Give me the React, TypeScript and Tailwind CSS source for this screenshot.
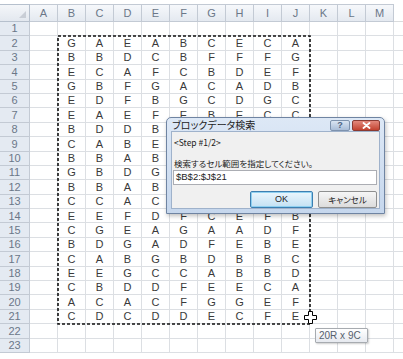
import React from "react";

const cols = ["A", "B", "C", "D", "E", "F", "G", "H", "I", "J", "K", "L", "M"];

// rows 2..21, columns B..J ("." = hidden under the dialog)
const data = [
  "GAEABCECA",
  "BBDCBFFFG",
  "ECAFCBDEF",
  "GBFGACADB",
  "EDFBGCDGC",
  "EAEFEBECC",
  "BDDB.....",
  "CABE.....",
  "BBAB.....",
  "GBDG.....",
  "BBAB.....",
  "CCAC.....",
  "EEFDFCEFB",
  "CGEAGAADF",
  "BDGADFEBE",
  "CABGBDBBC",
  "EEGCCABBD",
  "CBDDFEECA",
  "ACACFGGEF",
  "CDCDDECFE",
];

function cellValue(row: number, col: number) {
  if (row < 2 || row > 21 || col < 1 || col > 9) return "";
  const v = data[row - 2][col - 1];
  return v === "." ? "" : v;
}

const jp = "font-['Noto_Sans_CJK_JP','Noto_Sans',sans-serif] [font-feature-settings:'palt']";

function Dialog() {
  return (
    <div className="absolute left-[166px] top-[117px] w-[219px] h-[97px] rounded-t-[5px] border border-[#6f84a2] bg-gradient-to-b from-[#dde8f6] to-[#c6d7ed] flex flex-col px-[4px] pb-[4px] shadow-[1px_2px_4px_rgba(0,0,0,0.25)]">
      <div className="flex items-center h-[16px]">
        <span className={`${jp} text-[10px] leading-none text-[#1b1b1b] pl-[1px]`}>ブロックデータ検索</span>
        <div className="ml-auto flex gap-[2px] self-start mt-[2px]">
          <div className="w-[20px] h-[11px] rounded-[2px] border border-[#7d92ae] bg-gradient-to-b from-[#d9e4f2] to-[#a9bdd8] flex items-center justify-center font-['Liberation_Sans',sans-serif] text-[9px] font-bold leading-none text-[#4d6382]">
            ?
          </div>
          <div className="w-[28px] h-[11px] rounded-[2px] border border-[#8a3a32] bg-gradient-to-b from-[#e3877b] to-[#c2412f] flex items-center justify-center">
            <svg width="9" height="7" viewBox="0 0 9 7">
              <path d="M1.5 1 L7.5 6 M7.5 1 L1.5 6" stroke="#fff" strokeWidth="1.8" strokeLinecap="round" />
            </svg>
          </div>
        </div>
      </div>
      <div className="flex-1 bg-[#f0f0f0] border border-[#9fb2cb] flex flex-col pl-[1px] pr-[2px]">
        <div className={`${jp} text-[8.5px] leading-none text-[#1b1b1b] pl-[1px] mt-[6px]`}>&lt;Step #1/2&gt;</div>
        <div className={`${jp} text-[8.5px] leading-none text-[#1b1b1b] pl-[1px] mt-[12px]`}>検索するセル範囲を指定してください。</div>
        <div className="mt-[3px] h-[15px] bg-white border border-[#abadb3] flex items-center pl-[2px] font-['Liberation_Sans',sans-serif] text-[9.5px] text-[#222]">
          $B$2:$J$21
        </div>
        <div className="flex justify-end gap-[5px] mt-[6px]">
          <div className="w-[63px] h-[17px] rounded-[2px] border border-[#3c7fb1] bg-gradient-to-b from-[#eaf6fd] to-[#c4e1f3] shadow-[inset_0_0_0_1px_#8fd0f0] flex items-center justify-center font-['Liberation_Sans',sans-serif] text-[9px] text-[#222]">
            OK
          </div>
          <div className={`w-[59px] h-[17px] rounded-[2px] border border-[#8e8f8f] bg-gradient-to-b from-[#f6f6f6] to-[#dcdcdc] flex items-center justify-center ${jp} text-[8.5px] text-[#222]`}>
            キャンセル
          </div>
        </div>
      </div>
    </div>
  );
}

export default function App() {
  const rows = Array.from({ length: 23 }, (_, i) => i + 1);
  return (
    <div className="relative w-[403px] h-[359px] bg-white overflow-hidden font-['Liberation_Sans',sans-serif]">
      <div className="h-[4px]" />
      {/* column headers */}
      <div className="flex h-[18px]">
        <div className="relative w-[30px] border-y border-r border-[#b6c0cd] bg-gradient-to-b from-[#f4f6f9] to-[#e3e8ef]">
          <div className="absolute right-[3px] bottom-[3px] w-0 h-0 border-l-[7px] border-l-transparent border-b-[7px] border-b-[#c9ced6]" />
        </div>
        {cols.map((c) => (
          <div
            key={c}
            className="w-[28px] border-y border-r border-[#c3cad4] bg-gradient-to-b from-[#f6f8fb] to-[#e4e9f0] flex items-center justify-center text-[11px] text-[#6b7788]"
          >
            {c}
          </div>
        ))}
        <div className="flex-1 border-b border-[#dadcdd]" />
      </div>
      {/* rows */}
      {rows.map((r) => (
        <div key={r} className="flex h-[14.4px]">
          <div className="w-[30px] bg-[#e4eaf2] border-r border-b border-[#c3cad4] flex items-center justify-center text-[11px] text-[#6b7788]">
            {r}
          </div>
          {cols.map((c, ci) => (
            <div
              key={c}
              className="w-[28px] border-r border-b border-[#dcdfe3] flex items-center justify-center text-[11px] text-[#3a3a3a]"
            >
              {cellValue(r, ci)}
            </div>
          ))}
          <div className="flex-1 border-b border-[#dcdfe3]" />
        </div>
      ))}

      {/* copy selection marquee */}
      <svg className="absolute left-[57px] top-[35.4px]" width="254" height="290">
        <rect x="1" y="1" width="252" height="288" fill="none" stroke="#111" strokeWidth="1.6" strokeDasharray="3 2" />
      </svg>

      <Dialog />

      {/* cursor */}
      <svg className="absolute left-[304px] top-[311px]" width="13" height="13" viewBox="0 0 13 13">
        <path
          d="M4.5 0.5 H8.5 V4.5 H12.5 V8.5 H8.5 V12.5 H4.5 V8.5 H0.5 V4.5 H4.5 Z"
          fill="#fff"
          stroke="#000"
          strokeWidth="1"
        />
      </svg>

      {/* tooltip */}
      <div className="absolute left-[315px] top-[328px] w-[53px] h-[15px] border border-[#a7abb0] rounded-[1px] bg-gradient-to-b from-[#ffffff] to-[#e6e9ef] shadow-[1px_1px_2px_rgba(0,0,0,0.2)] flex items-center pl-[3px] font-['Liberation_Sans',sans-serif] text-[10px] text-[#56606d]">
        20R x 9C
      </div>
    </div>
  );
}
